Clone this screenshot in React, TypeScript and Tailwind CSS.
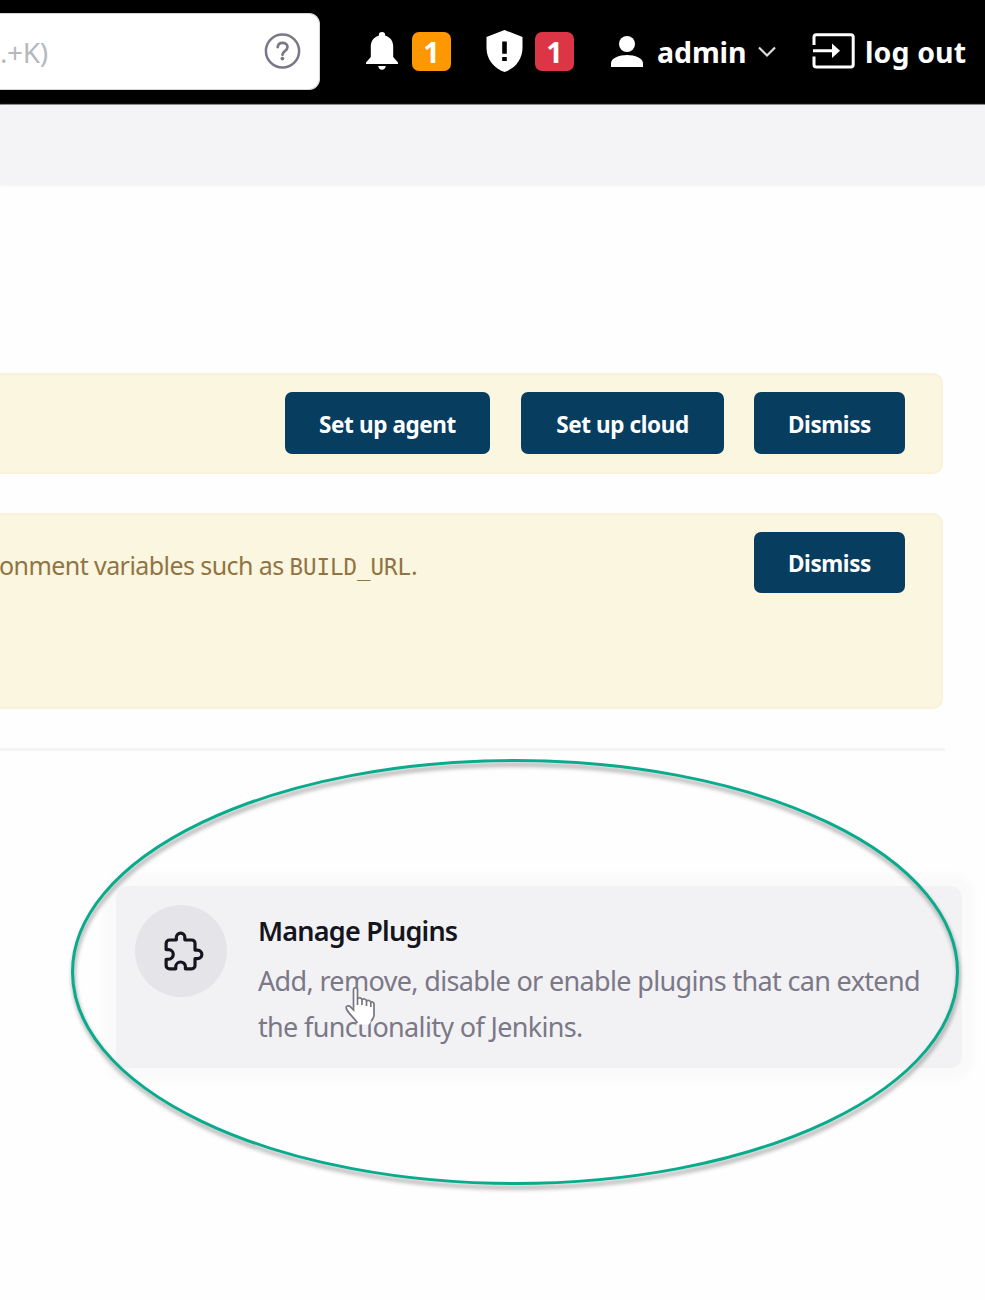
import type { ReactNode } from "react";
import { IoExtensionPuzzleOutline } from "react-icons/io5";

function SearchBox() {
  return (
    <div className="flex h-[77px] w-[320px] shrink-0 items-center justify-between rounded-r-[11px] border border-l-0 border-[#d5d5d5] bg-white pr-[18px]">
      <span className="whitespace-nowrap pt-[2px] text-[28px] leading-none tracking-[-0.400px] text-[#b5b8bf]">.+K)</span>
      <svg width="38" height="38" viewBox="0 0 38 38" fill="none" stroke="#7b7789" className="shrink-0">
        <circle cx="19.500" cy="19" r="16.600" strokeWidth="2.500" />
        <path d="M14.700 15.200c.2-2.900 2.100-4.300 4.800-4.300 2.900 0 5 1.600 5 4.100 0 2-1.100 3-2.700 4.100-1.600 1.100-2.300 1.900-2.300 3.700" strokeWidth="2.700" strokeLinecap="round" />
        <circle cx="19.400" cy="26.600" r="1.900" fill="#7b7789" stroke="none" />
      </svg>
    </div>
  );
}

function Badge({ className }: { className: string }) {
  return (
    <span className={`flex h-[39px] w-[39px] shrink-0 items-center justify-center rounded-[7px] text-[29px] leading-none font-bold text-white ${className}`}>
      1
    </span>
  );
}

function Header() {
  return (
    <header className="flex h-[105px] items-center border-b border-[#777] bg-black pb-[2px] text-white">
      <SearchBox />
      <svg width="32" height="38" viewBox="0 0 32 38" fill="#fff" className="ml-[46px] shrink-0">
        <path d="M16 0c-2 0-3.200 1.300-3.200 3v.8C7.800 5 4.800 9 4.800 14.500V25L0 30.500v1.400h32v-1.400L27.200 25V14.500C27.200 9 24.200 5 19.200 3.800V3C19.200 1.300 18 0 16 0zM12.200 34h7.600c-.3 2.400-1.700 3.800-3.800 3.800S12.500 36.400 12.200 34z" />
      </svg>
      <Badge className="ml-[14px] bg-[#fe9700]" />
      <svg width="37" height="42" viewBox="0 0 37 42" className="ml-[35px] shrink-0">
        <path d="M18.500 0 36.500 7v11c0 11-7.300 20.500-18 24C7.800 38.500.5 29 .5 18V7z" fill="#fff" />
        <path d="M16.200 11.500h4.600v12.200h-4.600zM16.200 27h4.600v4h-4.600z" fill="#000" />
      </svg>
      <Badge className="ml-[12px] bg-[#dc3545]" />
      <svg width="32" height="32" viewBox="0 0 32 32" fill="#fff" className="ml-[37px] mt-[2px] shrink-0">
        <circle cx="16" cy="8" r="8" />
        <path d="M0 31v-3.500C0 22 8 19 16 19s16 3 16 8.500V31z" />
      </svg>
      <span className="ml-[14px] w-[89px] shrink-0 whitespace-nowrap pt-[3px] text-[28.500px] leading-none font-bold tracking-[-0.100px]">admin</span>
      <svg width="20" height="12" viewBox="0 0 20 12" fill="none" stroke="#ddd" strokeWidth="2.200" className="ml-[11px] mt-[1px] shrink-0">
        <path d="m2 1.500 8 8 8-8" />
      </svg>
      <svg width="43" height="36" viewBox="0 0 43 36" fill="none" stroke="#fff" strokeWidth="3" className="ml-[35px] shrink-0">
        <path d="M2 12V4c0-1.500.8-2.300 2.300-2.300h34.500c1.500 0 2.400.8 2.400 2.300v27.500c0 1.500-.9 2.400-2.400 2.400H4.300C2.800 33.900 2 33 2 31.500v-8M1 17.800h20" />
        <path d="m20 10.500 8 7.300-8 7.300z" fill="#fff" stroke="none" />
      </svg>
      <span className="ml-[10px] w-[102px] shrink-0 whitespace-nowrap pt-[3px] text-[28.500px] leading-none font-bold tracking-[0.100px]">log out</span>
    </header>
  );
}

function Button({ className, children }: { className: string; children: ReactNode }) {
  return (
    <button className={`flex shrink-0 items-center justify-center whitespace-nowrap rounded-[7px] bg-[#073d5f] pt-[3px] text-[22.500px] font-bold tracking-[-0.400px] text-white ${className}`}>
      {children}
    </button>
  );
}

function PluginsCard() {
  return (
    <a className="ml-[116px] mt-[135px] flex h-[182px] w-[846px] rounded-[12px] bg-[#f2f2f4] pl-[19px] pt-[19px] shadow-[0_0_6px_13px_#fafafb]">
      <span className="flex h-[92px] w-[92px] shrink-0 items-center justify-center rounded-full bg-[#e5e4e9] pl-[6px]">
        <IoExtensionPuzzleOutline className="h-[44px] w-[44px] text-[#15151f] [&_path]:[stroke-width:37px]" />
      </span>
      <span className="ml-[31px] flex flex-col whitespace-nowrap">
        <span className="mt-[7px] text-[27px] leading-[38px] font-semibold tracking-[-0.770px] text-[#15151d]">Manage Plugins</span>
        <span className="mt-[8px] text-[27px] leading-[46px] tracking-[-0.660px] text-[#7b7888]">
          Add, remove, disable or enable plugins that can extend
          <br />
          the functionality of Jenkins.
        </span>
      </span>
    </a>
  );
}

function Highlight() {
  return (
    <svg width="900" height="444" viewBox="0 0 900 444" fill="none" className="pointer-events-none absolute left-[65px] top-[750px] drop-shadow-[1px_4px_2px_rgba(0,0,0,0.4)]">
      <ellipse cx="450" cy="222" rx="442.500" ry="211.500" stroke="#08ab8b" strokeWidth="3" />
    </svg>
  );
}

function HandCursor() {
  return (
    <svg width="32" height="42" viewBox="0 0 32 42" className="pointer-events-none absolute left-[344px] top-[986px]">
      <path
        d="M9.500 24V3.500C9.500 1 13.500 1 13.500 3.500V13c1-2 4.500-1.500 4.500 1 1-1.800 4.500-1.200 4.500 1.200 1-1.600 4.300-.8 4.300 1.300 1.300-1.200 3.200-.2 3.200 1.500v11c0 4-3.500 6-5 9.500H13.500C11 33 5 28 2.500 23c-1.300-3 2-4 3.800-2.300z"
        fill="#fff"
      />
      <path
        d="M13.500 37C11 33 5 28 2.500 23c-1.300-3 2-4 3.800-2.300L9.500 24V3.500C9.500 1 13.500 1 13.500 3.500V19M13.500 13c1-2 4.500-1.500 4.500 1v5M18 14c1-1.800 4.500-1.200 4.500 1.200V20M22.500 15.200c1-1.600 4.300-.8 4.300 1.300V21M26.800 16.500c1.300-1.200 3.200-.2 3.200 1.500v11c0 2.500-1.500 4.500-3 6.500"
        fill="none"
        stroke="#777681"
        strokeWidth="1.700"
      />
    </svg>
  );
}

export default function App() {
  return (
    <div className="relative h-[1300px] w-[985px] overflow-hidden bg-[#fefefe] font-['Noto_Sans',sans-serif]">
      <Header />
      <div className="h-[80px] bg-[#f4f4f6] shadow-[0_1px_3px_#f4f4f6]" />
      <main>
        <section className="mt-[188px] flex h-[101px] w-[943px] justify-end rounded-r-[10px] border-2 border-l-0 border-[#f9f1d9] bg-[#faf6df] pr-[36px] pt-[17px]">
          <Button className="h-[62px] w-[205px]">Set up agent</Button>
          <Button className="ml-[31px] h-[62px] w-[203px]">Set up cloud</Button>
          <Button className="ml-[30px] h-[62px] w-[151px]">Dismiss</Button>
        </section>
        <section className="mt-[39px] flex h-[196px] w-[943px] justify-between rounded-r-[10px] border-2 border-l-0 border-[#f9f1d9] bg-[#fbf6df] pr-[36px] pt-[17px]">
          <p className="-ml-[1px] mt-[14px] whitespace-nowrap text-[25px] leading-[38px] tracking-[-0.570px] text-[#917443]">
            onment variables such as <code className="font-['DejaVu_Sans_Mono',monospace] text-[22.500px] tracking-[-0.050px]">BUILD_URL</code>.
          </p>
          <Button className="h-[61px] w-[151px]">Dismiss</Button>
        </section>
        <hr className="mt-[39px] h-[3px] w-[945px] border-0 bg-[#f4f4f6]" />
        <PluginsCard />
      </main>
      <Highlight />
      <HandCursor />
    </div>
  );
}
